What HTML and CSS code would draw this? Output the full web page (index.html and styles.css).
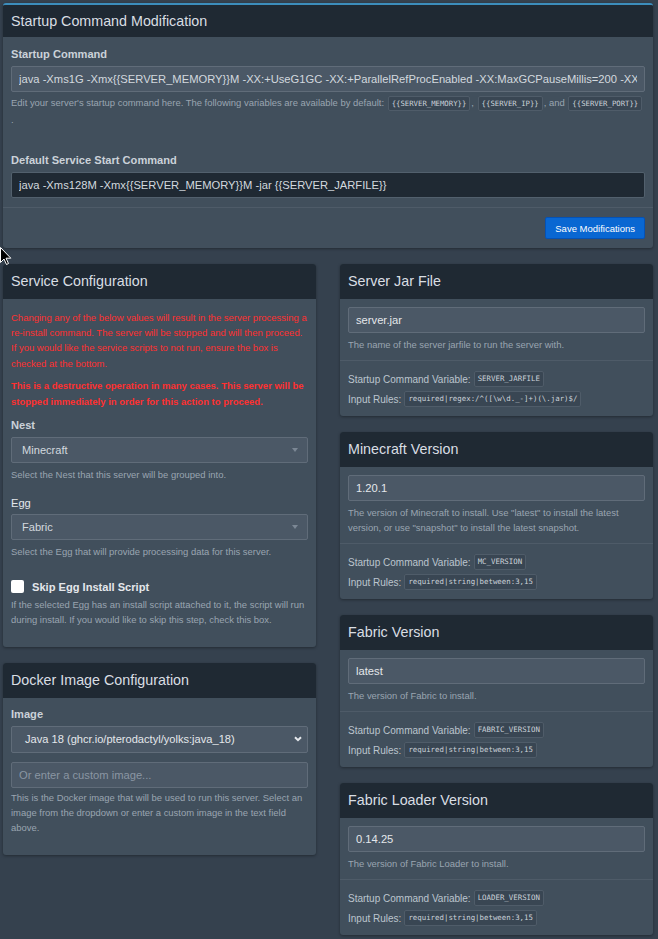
FILE: index.html
```html
<!DOCTYPE html>
<html lang="en">
<head>
<meta charset="utf-8">
<title>Startup Command Modification</title>
<link rel="stylesheet" href="styles.css">
</head>
<body>
<div class="page">
  <section class="box box-primary">
    <header class="box-header box-header-primary"><h3 class="box-title">Startup Command Modification</h3></header>
    <div class="box-body body-first">
      <label class="label">Startup Command</label>
      <input class="control" type="text" value="java -Xms1G -Xmx{{SERVER_MEMORY}}M -XX:+UseG1GC -XX:+ParallelRefProcEnabled -XX:MaxGCPauseMillis=200 -XX:+UnlockExperimentalVMOptions -XX:+DisableExplicitGC -jar {{SERVER_JARFILE}}">
      <p class="help help-top">Edit your server's startup command here. The following variables are available by default: <code class="code">{{SERVER_MEMORY}}</code>, <code class="code">{{SERVER_IP}}</code>, and <code class="code">{{SERVER_PORT}}</code>.</p>
    </div>
    <div class="box-body body-second">
      <label class="label">Default Service Start Command</label>
      <input class="control control-dark" type="text" readonly value="java -Xms128M -Xmx{{SERVER_MEMORY}}M -jar {{SERVER_JARFILE}}">
    </div>
    <div class="box-footer footer-actions">
      <button class="btn-primary" type="button">Save Modifications</button>
    </div>
  </section>

  <div class="columns">
    <div class="column">
      <section class="box">
        <header class="box-header"><h3 class="box-title">Service Configuration</h3></header>
        <div class="box-body service-body">
          <p class="danger">Changing any of the below values will result in the server processing a re-install command. The server will be stopped and will then proceed. If you would like the service scripts to not run, ensure the box is checked at the bottom.</p>
          <p class="danger danger-strong">This is a destructive operation in many cases. This server will be stopped immediately in order for this action to proceed.</p>
          <div class="group group-nest">
            <label class="label">Nest</label>
            <div class="select2"><span class="select-value">Minecraft</span><span class="caret"></span></div>
            <p class="help help-select">Select the Nest that this server will be grouped into.</p>
          </div>
          <div class="group group-egg">
            <label class="label label-light">Egg</label>
            <div class="select2"><span class="select-value">Fabric</span><span class="caret"></span></div>
            <p class="help help-select">Select the Egg that will provide processing data for this server.</p>
          </div>
          <div class="group group-skip">
            <label class="check-row"><span class="checkbox"></span><span class="check-text">Skip Egg Install Script</span></label>
            <p class="help help-tight">If the selected Egg has an install script attached to it, the script will run during install. If you would like to skip this step, check this box.</p>
          </div>
        </div>
      </section>

      <section class="box box-spaced">
        <header class="box-header"><h3 class="box-title">Docker Image Configuration</h3></header>
        <div class="box-body docker-body">
          <label class="label">Image</label>
          <div class="native-select"><span class="native-value">Java 18 (ghcr.io/pterodactyl/yolks:java_18)</span>
            <svg class="chevron" width="8" height="6" viewBox="0 0 8 6"><polyline points="1,1.2 4,4.2 7,1.2" fill="none" stroke="#e4e7eb" stroke-width="2"/></svg>
          </div>
          <input class="control control-custom" type="text" placeholder="Or enter a custom image...">
          <p class="help help-tight">This is the Docker image that will be used to run this server. Select an image from the dropdown or enter a custom image in the text field above.</p>
        </div>
      </section>
    </div>

    <div class="column">
      <section class="box">
        <header class="box-header"><h3 class="box-title">Server Jar File</h3></header>
        <div class="box-body var-body">
          <input class="control control-var" type="text" value="server.jar">
          <p class="help var-help">The name of the server jarfile to run the server with.</p>
        </div>
        <div class="box-footer var-footer">
          <p class="var-line">Startup Command Variable: <code class="code code-sm">SERVER_JARFILE</code></p>
          <p class="var-line">Input Rules: <code class="code code-sm">required|regex:/^([\w\d._-]+)(\.jar)$/</code></p>
        </div>
      </section>

      <section class="box box-spaced">
        <header class="box-header"><h3 class="box-title">Minecraft Version</h3></header>
        <div class="box-body var-body">
          <input class="control control-var" type="text" value="1.20.1">
          <p class="help var-help">The version of Minecraft to install. Use "latest" to install the latest version, or use "snapshot" to install the latest snapshot.</p>
        </div>
        <div class="box-footer var-footer">
          <p class="var-line">Startup Command Variable: <code class="code code-sm">MC_VERSION</code></p>
          <p class="var-line">Input Rules: <code class="code code-sm">required|string|between:3,15</code></p>
        </div>
      </section>

      <section class="box box-spaced">
        <header class="box-header"><h3 class="box-title">Fabric Version</h3></header>
        <div class="box-body var-body">
          <input class="control control-var" type="text" value="latest">
          <p class="help var-help">The version of Fabric to install.</p>
        </div>
        <div class="box-footer var-footer">
          <p class="var-line">Startup Command Variable: <code class="code code-sm">FABRIC_VERSION</code></p>
          <p class="var-line">Input Rules: <code class="code code-sm">required|string|between:3,15</code></p>
        </div>
      </section>

      <section class="box box-spaced">
        <header class="box-header"><h3 class="box-title">Fabric Loader Version</h3></header>
        <div class="box-body var-body">
          <input class="control control-var" type="text" value="0.14.25">
          <p class="help var-help">The version of Fabric Loader to install.</p>
        </div>
        <div class="box-footer var-footer">
          <p class="var-line">Startup Command Variable: <code class="code code-sm">LOADER_VERSION</code></p>
          <p class="var-line">Input Rules: <code class="code code-sm">required|string|between:3,15</code></p>
        </div>
      </section>
    </div>
  </div>

  <svg class="cursor" width="12" height="19" viewBox="0 0 12 19"><path d="M0.5,0.5 L0.5,15.5 L4,12 L6.5,17.5 L8.5,16.5 L6,11.2 L10.8,11.2 Z" fill="#000" stroke="#fff" stroke-width="1"/></svg>
</div>
</body>
</html>
```

FILE: styles.css
```css
* { box-sizing: border-box; }
html, body { margin: 0; padding: 0; }
body {
  background: #35414e;
  font-family: "Liberation Sans", Arial, sans-serif;
  color: #cbd2d9;
  width: 658px;
  height: 939px;
  overflow: hidden;
}
.page { position: relative; padding: 3px 5px 0 3px; }

.box {
  background: #414f5c;
  border-radius: 3px;
  box-shadow: 0 1px 3px rgba(0, 0, 0, 0.35);
  overflow: hidden;
}
.box-primary { border-top: 2px solid #3c8dbc; }
.box-spaced { margin-top: 16px; }

.box-header {
  background: #1f2933;
  height: 35px;
  display: flex;
  align-items: center;
  padding: 0 8px;
}
.box-header-primary { height: 32px; }
.box-title {
  margin: 0;
  font-size: 14.3px;
  font-weight: normal;
  color: #d9dee3;
  line-height: 1;
}

.box-body { padding: 8px; }
.body-first { padding: 9px 8px 8px; }
.body-second { padding: 9px 8px 9px; }

.label {
  display: block;
  font-size: 11.1px;
  font-weight: bold;
  line-height: 16px;
  color: #cbd2d9;
  margin-bottom: 4px;
}
.label-light { font-weight: normal; color: #e4e7eb; margin-bottom: 3px; }

.control {
  display: block;
  width: 100%;
  height: 26px;
  margin: 0;
  padding: 0 7px;
  font-family: "Liberation Sans", Arial, sans-serif;
  font-size: 11.2px;
  color: #d3d9df;
  background: #4b5866;
  border: 1px solid #606c79;
  border-radius: 2px;
  outline: none;
}
.control::placeholder { color: #8a96a3; }
.control-dark { background: #1f2933; border-color: #52606d; }
.control-var { color: #e4e7eb; }
.control-custom { margin-top: 9px; }

.help {
  margin: 3px 0 0;
  font-size: 9.45px;
  line-height: 15px;
  color: #9aa5b1;
}
.help-top { margin: 2px 0 7px; line-height: 17px; }
.help-tight { margin-top: 2px; }
.help-select { margin-top: 4px; }

.code {
  display: inline-block;
  vertical-align: middle;
  font-family: "DejaVu Sans Mono", monospace;
  font-size: 7.3px;
  line-height: 13px;
  height: 15px;
  padding: 0 3px;
  margin: 0 1px;
  color: #cbd2d9;
  background: #394653;
  border: 1px solid #4f5c69;
  border-radius: 2px;
}
.code-sm { font-size: 7.4px; height: 16px; line-height: 14px; margin: 0 0 0 3px; }

.box-footer { border-top: 1px solid #4e5b68; }
.footer-actions {
  display: flex;
  justify-content: flex-end;
  padding: 9px 8px;
}
.btn-primary {
  height: 22px;
  padding: 0 9px;
  font-family: "Liberation Sans", Arial, sans-serif;
  font-size: 9.5px;
  color: #fff;
  background: #0967d2;
  border: 1px solid #0552b5;
  border-radius: 2px;
}

.columns {
  display: grid;
  grid-template-columns: 313px 313px;
  column-gap: 24px;
  margin-top: 16px;
  align-items: start;
}

.service-body { padding: 11px 8px 20px; }
.danger {
  margin: 0;
  font-size: 9.5px;
  line-height: 15.2px;
  color: #ff3030;
}
.danger-strong { font-weight: bold; line-height: 16px; margin-top: 7px; }

.group-nest { margin-top: 7px; }
.group-egg { margin-top: 13px; }
.group-skip { margin-top: 20px; }

.select2 {
  display: flex;
  align-items: center;
  justify-content: space-between;
  height: 26px;
  padding: 0 9px 0 10px;
  background: #4b5866;
  border: 1px solid #606c79;
  border-radius: 2px;
  font-size: 11.1px;
  color: #d3d9df;
}
.caret {
  width: 0;
  height: 0;
  border-top: 4px solid #7b8794;
  border-left: 3.5px solid transparent;
  border-right: 3.5px solid transparent;
}

.check-row {
  display: flex;
  align-items: center;
  height: 16px;
}
.checkbox {
  width: 13px;
  height: 13px;
  background: #fff;
  border-radius: 2px;
  margin-right: 8px;
}
.check-text {
  font-size: 11.1px;
  font-weight: bold;
  color: #e4e7eb;
}

.docker-body { padding: 8px 8px 20px; }
.native-select {
  display: flex;
  align-items: center;
  justify-content: space-between;
  height: 27px;
  padding: 0 5px 0 13px;
  background: #4b5866;
  border: 1px solid #606c79;
  border-radius: 2px;
  font-size: 11.1px;
  color: #e4e7eb;
}

.var-body { padding: 8px 8px 8px; }
.var-help { margin-top: 4px; line-height: 15px; }
.var-footer { padding: 8px 8px 7px; }
.var-line {
  margin: 0;
  height: 20px;
  display: flex;
  align-items: center;
  font-size: 10px;
  color: #bcc5ce;
}

.cursor { position: absolute; left: 0; top: 247px; }
```
